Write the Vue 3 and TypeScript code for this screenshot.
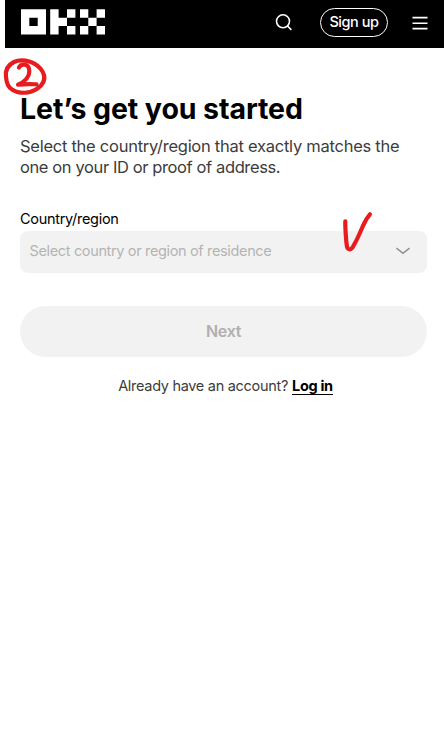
<script setup lang="ts">
import { ref } from 'vue'

const country = ref<string>('')
const placeholder = 'Select country or region of residence'
</script>

<template>
  <div class="page">
    <header class="bar">
      <svg class="logo" width="84" height="26" viewBox="0 0 84 26" fill="#fff" role="img">
        <path fill-rule="evenodd" d="M0 .2h25v25.3H0zM8.3 8.7v8.3h8.4V8.7z" />
        <path d="M29.2.2h8.4v8.5H46V17h-8.4v8.5h-8.4zM46 .2h8.4v8.5H46zM46 17h8.4v8.5H46z" />
        <path d="M59 .2h8.3v8.5H59zM75.6.2H84v8.5h-8.4zM67.3 8.7h8.3V17h-8.3zM59 17h8.3v8.5H59zM75.6 17H84v8.5h-8.4z" />
      </svg>
      <nav class="actions">
        <svg class="search" width="18" height="18" viewBox="0 0 18 18" fill="none" stroke="#fff" stroke-width="1.6">
          <circle cx="8" cy="7.3" r="6.5" />
          <path d="M12.5 12l3.9 3.9" />
        </svg>
        <button class="signup" type="button">Sign up</button>
        <svg class="menu" width="16" height="14" viewBox="0 0 16 14" fill="none" stroke="#fff" stroke-width="1.6">
          <path d="M.5 1.6h15M.5 7.2h15M.5 12.6h15" />
        </svg>
      </nav>
    </header>

    <main class="content">
      <h1 class="title">Let’s get you started</h1>
      <p class="intro"><span class="line first">Select the country/region that exactly matches the</span> <span class="line second">one on your ID or proof of address.</span></p>
      <div class="label"><span>Country/region</span></div>
      <div class="select">
        <span class="value">{{ country || placeholder }}</span>
        <svg width="16" height="10" viewBox="0 0 16 10" fill="none" stroke="#909090" stroke-width="1.5">
          <path d="M1.5 2.2L8 7.4l6.500-5.200" />
        </svg>
      </div>
      <button class="next" type="button" :disabled="!country">Next</button>
      <p class="login"><span class="ask">Already have an account?</span><a class="link">Log in</a></p>
    </main>

    <svg class="ink" width="444" height="743" viewBox="0 0 444 743" fill="none" stroke="#e81c1e" stroke-width="4.2" stroke-linecap="round" stroke-linejoin="round">
      <path d="M14 62C8 65 5 70 6 77c.5 6 1.500 10 6 12.500 4 2.800 9 3.500 14 3.200 6-.5 11-3.200 15-7.200 4-4.500 4.500-9 1.500-14-3-5-7-8-12.500-9.800-5-1.500-11.500-1.800-16 .3" />
      <path d="M19 67.500c.8-2.300 3-3 5.500-3 3.500.5 5 3.500 4.800 7.500-.3 5.500-4.300 9.500-11.300 12.700 6-.7 12-.5 18.500-.4" />
      <path d="M345.300 221.300c-.2 8 .6 15 1.200 22 .4 4.500 1 6 3.500 6 2.200 0 3-2.500 4-4.500 4-6.500 7-15 10.500-22 1.500-3.500 3.500-6 5.500-8.500" />
    </svg>
  </div>
</template>

<style>
body {
  background: #fff;
}
</style>

<style scoped>
.page {
  position: relative;
  height: 743px;
  overflow: hidden;
  background: #fff;
  color: #000;
  font-family: Inter, "Liberation Sans", sans-serif;
}
.bar {
  display: flex;
  align-items: flex-start;
  justify-content: space-between;
  box-sizing: border-box;
  height: 48px;
  margin-left: 5px;
  padding: 8px 16px 0;
  background: #000;
}
.logo {
  margin-top: 1px;
}
.actions {
  display: flex;
  align-items: flex-start;
}
.search {
  margin: 6px 27px 0 0;
}
.signup {
  box-sizing: border-box;
  width: 68px;
  height: 29px;
  margin-right: 24px;
  padding: 0 0 1px;
  border: 1px solid #fff;
  border-radius: 15px;
  background: #000;
  color: #fff;
  font: 500 14.5px/26px Inter, sans-serif;
  letter-spacing: -0.45px;
  white-space: nowrap;
}
.menu {
  margin-top: 8px;
}
.content {
  padding: 43px 17px 0 20px;
}
.title {
  margin: 0;
  font-size: 28.5px;
  line-height: 35px;
  font-weight: 700;
  letter-spacing: -0.08px;
  white-space: nowrap;
}
.intro {
  margin: 10px 0 0;
  color: #3c3c3c;
  font-size: 16.5px;
  line-height: 21px;
}
.line {
  display: block;
  width: max-content;
  white-space: nowrap;
}
.first {
  letter-spacing: -0.26px;
}
.second {
  letter-spacing: -0.39px;
}
.label {
  margin-top: 31px;
  font-size: 14.5px;
  line-height: 20px;
  letter-spacing: -0.3px;
}
.select {
  display: flex;
  align-items: center;
  justify-content: space-between;
  box-sizing: border-box;
  height: 42px;
  margin-top: 2px;
  padding: 0 16px 2px 9.5px;
  border-radius: 8px;
  background: #f2f2f2;
  color: #b4b4b4;
  font-size: 14.5px;
  letter-spacing: -0.35px;
}
.value {
  margin-bottom: 1px;
}
.next {
  display: block;
  width: 100%;
  height: 51px;
  margin-top: 33px;
  padding: 0;
  border: 0;
  border-radius: 26px;
  background: #f2f2f2;
  color: #b0b0b0;
  font: 600 16px/51px Inter, sans-serif;
  letter-spacing: -0.3px;
}
.login {
  display: flex;
  justify-content: center;
  gap: 4px;
  margin: 19px 0 0 4px;
  color: #3c3c3c;
  font-size: 14.5px;
  line-height: 20px;
  letter-spacing: -0.3px;
}
.link {
  height: 18px;
  border-bottom: 1px solid #000;
  color: #000;
  font-weight: 700;
}
.ink {
  position: absolute;
  top: 0;
  left: 0;
  pointer-events: none;
}
</style>
